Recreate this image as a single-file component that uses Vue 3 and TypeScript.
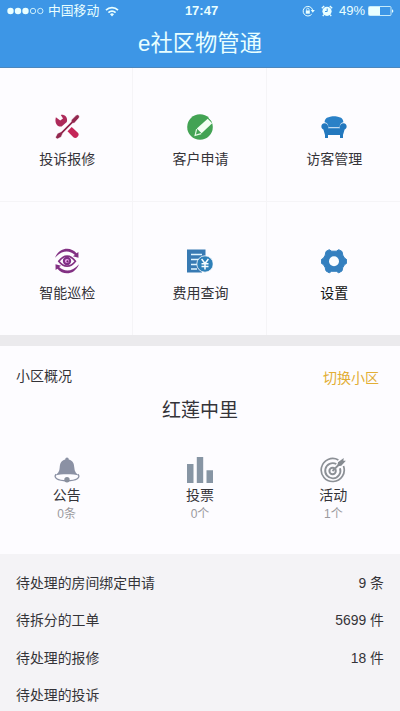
<script setup lang="ts">
interface Shortcut {
  icon: 'tools' | 'pencil' | 'sofa' | 'eye' | 'bill' | 'gear'
  label: string
}

interface Stat {
  icon: 'bell' | 'bars' | 'target'
  label: string
  count: string
}

interface Todo {
  label: string
  value?: string
}

const shortcuts: Shortcut[] = [
  { icon: 'tools', label: '投诉报修' },
  { icon: 'pencil', label: '客户申请' },
  { icon: 'sofa', label: '访客管理' },
  { icon: 'eye', label: '智能巡检' },
  { icon: 'bill', label: '费用查询' },
  { icon: 'gear', label: '设置' },
]

const stats: Stat[] = [
  { icon: 'bell', label: '公告', count: '0条' },
  { icon: 'bars', label: '投票', count: '0个' },
  { icon: 'target', label: '活动', count: '1个' },
]

const todos: Todo[] = [
  { label: '待处理的房间绑定申请', value: '9 条' },
  { label: '待拆分的工单', value: '5699 件' },
  { label: '待处理的报修', value: '18 件' },
  { label: '待处理的投诉' },
]
</script>

<template>
  <div class="screen">
    <header class="header">
      <div class="status">
        <div class="status-left">
          <svg class="signal" viewBox="0 0 37 8">
            <g fill="currentColor">
              <circle cx="3.5" cy="4" r="3.2" />
              <circle cx="11" cy="4" r="3.2" />
              <circle cx="18.5" cy="4" r="3.2" />
            </g>
            <g fill="none" stroke="currentColor" stroke-width="0.8">
              <circle cx="26" cy="4" r="2.7" />
              <circle cx="33.3" cy="4" r="2.7" />
            </g>
          </svg>
          <span class="carrier">中国移动</span>
          <svg class="wifi" viewBox="0 0 14 11">
            <g fill="none" stroke="currentColor" stroke-width="1.7">
              <path d="M1 4.2a8.5 8.5 0 0 1 12 0" />
              <path d="M3.4 6.6a5.1 5.1 0 0 1 7.2 0" />
            </g>
            <path d="M5 8.2a2.8 2.8 0 0 1 4 0l-2 2.2z" fill="currentColor" />
          </svg>
        </div>
        <span class="time">17:47</span>
        <div class="status-right">
          <svg class="lock" viewBox="0 0 13 12">
            <path d="M9.7 9.2A4.8 4.8 0 1 1 10.6 5" fill="none" stroke="currentColor" />
            <path d="M8.8 5h4l-2 2.8z" fill="currentColor" />
            <path d="M3.8 5.5h4v3.2h-4z" fill="currentColor" />
            <path d="M4.6 5.8V4.4a1.2 1.2 0 0 1 2.4 0v1.4" fill="none" stroke="currentColor" stroke-width="0.8" />
          </svg>
          <svg class="alarm" viewBox="0 0 12 12">
            <circle cx="6" cy="6.3" r="4.6" fill="currentColor" />
            <path d="M.8 3.2 3.2 1M8.8 1l2.4 2.2M2.8 9.7l-1 1.4M9.2 9.7l1 1.4" stroke="currentColor" stroke-width="1.3" />
            <path d="M6.2 3.5v3H4" fill="none" stroke="#3d96e6" />
          </svg>
          <span class="percent">49%</span>
          <svg class="battery" viewBox="0 0 26 10">
            <rect x=".5" y=".5" width="22.5" height="9" rx="1" fill="none" stroke="currentColor" stroke-width=".8" />
            <rect x="1" y="1" width="11" height="8" fill="currentColor" />
            <path d="M24 3.2c1.8.4 1.8 3.2 0 3.6z" fill="currentColor" />
          </svg>
        </div>
      </div>
      <h1 class="title">e社区物管通</h1>
    </header>

    <nav class="grid">
      <div v-for="item in shortcuts" :key="item.label" class="cell" :class="item.icon">
        <svg v-if="item.icon === 'tools'" class="icon" viewBox="0 0 26 26">
          <path d="M1.9 3.2 6.2 6.5 9 4.6 6.8.9c3.4-.6 6.4 1.6 6.3 5.3l-.3 1.8-5.2 4.5C3.9 13.4.1 9.3 1.9 3.2z" fill="#ad2a5a" />
          <path d="M13.5 17.3 17.7 13l6.2 5.8c2.4 2.5-1.7 6.9-4.5 4.5z" fill="#c52658" />
          <path d="M24.7 1.2c1 .9.8 2-.3 3.4l-4 4.5-1.7.2-9.9 10-1.7 3.8-4 2-1.6-1.8 2-3.9 3.8-1.7 9.9-9.9.2-1.8 4.4-4.4c1-1.1 2.1-1.2 2.9-.4z" fill="#93284f" stroke="#fdfcff" stroke-width=".5" />
        </svg>

        <svg v-else-if="item.icon === 'pencil'" class="icon" viewBox="0 0 26 26">
          <circle cx="13" cy="13" r="12.8" fill="#43a354" />
          <path d="m20.7 4.8 4.5 4.4-10.6 10.1-4.8-4.7z" fill="#f4fff4" />
          <path d="m9.6 15.2-1.5 6.2 6.1-1.7" fill="none" stroke="#e4f8e4" stroke-width="1.2" />
          <path d="m22.3 3.2 3 3" stroke="#fdfcff" stroke-width="2" />
        </svg>

        <svg v-else-if="item.icon === 'sofa'" class="icon" viewBox="0 0 26 26">
          <path d="M3.6 8.2C4 4.3 6.1 3.5 8.4 3.1 10 1.9 16 1.9 17.6 3.1c2.3.4 4.400 1.200 4.800 5.100-2.400.2-3.600 2-3.800 5H7.400c-.2-3-1.400-4.800-3.800-5z" fill="#2a81c7" />
          <path d="M7.5 14h11c.2-3.300 1.700-4.900 4-4.800 3.700.3 4.200 4.900 1.100 6.300L22 21H4l-1.600-5.500C-.7 14.100-.2 9.500 3.500 9.200c2.300-.1 3.800 1.500 4 4.800z" fill="#2378be" />
          <path d="M5.500 20.500v3.500M20.500 20.500v3.500" stroke="#2378be" stroke-width="3" />
          <path d="M7 14.200h12" stroke="#8fc3e8" stroke-width=".5" />
        </svg>

        <svg v-else-if="item.icon === 'eye'" class="icon" viewBox="0 0 26 26">
          <path d="M1 9.800C5.200-.8 16.500-2 22.600 5.200l1.800-1.100.1 5.700-5.600-1.500 2-1.400C15.500 1.800 7.600 2.100 1 9.800z" fill="#823083" />
          <path d="M25 16.200c-4.200 10.600-15.500 11.800-21.600 4.600l-1.800 1.100-.1-5.700 5.600 1.500-2 1.400c5.400 5.100 13.300 4.800 19.900-2.900z" fill="#823083" />
          <path d="M4.800 13.300c5-7 11.600-7 16.600 0-5 6.500-11.600 6.500-16.600 0z" fill="none" stroke="#823083" stroke-width="1.7" />
          <circle cx="13" cy="13" r="4.200" fill="#803087" />
          <circle cx="13" cy="13" r="2.100" fill="#f0aaf0" />
          <circle cx="13.500" cy="13.400" r="1.100" fill="#6a276f" />
        </svg>

        <svg v-else-if="item.icon === 'bill'" class="icon" viewBox="0 0 26 26">
          <path d="M0 1.500h18.500v21H15v2H0z" fill="#387ab3" />
          <path d="M4 6.500h11M4 11.500h9M4 16.500h6M4 21h6" stroke="#e0f5ff" stroke-width="1.600" />
          <circle cx="18" cy="16" r="8.200" fill="#2f80b8" stroke="#fdfcff" stroke-width=".8" />
          <path d="m14.600 11 3.400 4.500 3.400-4.500M18 15.500v6M14.500 15.700h7M14.500 18.500h7" fill="none" stroke="#f7fdff" stroke-width="1.500" />
        </svg>

        <svg v-else class="icon" viewBox="0 0 26 26">
          <path d="m8.200 1.700 2.500 1.500h4.600l2.500-1.500L21 3.500l.8 3.700 1.600 2.800 2.300 1.600v3.600l-2.300 1.600-1.600 2.800-.8 3.300-3.200 1.900-2.500-1.500h-4.600l-2.500 1.500L5 22.900l-.8-3.300-1.600-2.800-2.300-1.600v-3.600L2.600 10l1.600-2.800L5 3.500z" fill="#3580bf" stroke="#3580bf" stroke-linejoin="round" />
          <circle cx="13" cy="13.300" r="5" fill="#fbfdff" />
        </svg>
        <span class="cell-label">{{ item.label }}</span>
      </div>
    </nav>

    <section class="overview">
      <div class="overview-head">
        <span class="overview-title">小区概况</span>
        <span class="switch">切换小区</span>
      </div>
      <h2 class="community">红莲中里</h2>
      <div class="stats">
        <div v-for="stat in stats" :key="stat.label" class="stat">
          <svg v-if="stat.icon === 'bell'" class="icon" viewBox="0 0 26 26">
            <path d="M11.200 2.400a1.800 1.800 0 0 1 3.600 0c4.200 1 5.300 4.300 5.500 8 .2 4.100 1.700 6 4.700 8-5.400-1.500-18.600-1.500-24 0 3-2 4.500-3.900 4.700-8 .2-3.700 1.300-7 5.500-8z" fill="#8b91a4" />
            <path d="M2 17.300C-.8 20.500 3 23.800 13 23.800s13.800-3.300 11-6.500" fill="none" stroke="#8b91a4" stroke-width="1.300" />
            <circle cx="13" cy="22.700" r="2.700" fill="#898f9c" />
          </svg>
          <svg v-else-if="stat.icon === 'bars'" class="icon" viewBox="0 0 26 26">
            <path d="M0 7h6.500v19H0zM9.800 0h6.400v26H9.800zM19.500 13.200H26V26h-6.500z" fill="#8795a4" />
          </svg>
          <svg v-else class="icon" viewBox="0 0 26 26">
            <g fill="none" stroke="#8c9096">
              <path d="M18.400 3A11.500 11.500 0 1 0 23.500 9" stroke-width="1.700" />
              <path d="M16.300 7A7.600 7.600 0 1 0 20 11.300" stroke-width="1.900" />
              <circle cx="12.600" cy="14" r="3.200" stroke-width="2" />
              <path d="m12.500 14 7.500-7.500" stroke-width="1.800" />
            </g>
            <path d="m18 5.300 5.700-4.300-.3 2.700 2.500.1-4.600 5-3.900.4z" fill="#858a90" />
          </svg>
          <span class="stat-label">{{ stat.label }}</span>
          <span class="stat-count">{{ stat.count }}</span>
        </div>
      </div>
    </section>

    <ul class="todos">
      <li v-for="todo in todos" :key="todo.label" class="todo">
        <span>{{ todo.label }}</span>
        <span v-if="todo.value">{{ todo.value }}</span>
      </li>
    </ul>
  </div>
</template>

<style>
body {
  margin: 0;
  overflow: hidden;
}
</style>

<style scoped>
.screen {
  display: flex;
  flex-direction: column;
  width: 400px;
  height: 711px;
  overflow: hidden;
  background: #fdfcff;
  color: #343338;
  font-family: "Liberation Sans", "Noto Sans CJK SC", sans-serif;
  font-size: 14px;
}

.header {
  flex: none;
  box-sizing: border-box;
  height: 68px;
  border-bottom: 1px solid #4c87bd;
  background: #3d96e6;
  color: #e9ffff;
}

.status {
  display: grid;
  grid-template-columns: 1fr auto 1fr;
  align-items: center;
  height: 22px;
  padding: 0 6px 0 7px;
  line-height: 22px;
}

.status-left,
.status-right {
  display: flex;
  align-items: center;
}

.status-right {
  justify-content: flex-end;
}

.signal {
  width: 37px;
  height: 8px;
}

.carrier {
  margin-left: 4px;
  font-size: 12.8px;
}

.wifi {
  width: 14px;
  height: 11px;
  margin-left: 6px;
}

.time {
  padding-left: 2px;
  font-size: 13px;
  font-weight: 700;
}

.lock {
  width: 13px;
  height: 12px;
}

.alarm {
  width: 12px;
  height: 12px;
  margin-left: 6px;
}

.percent {
  margin-left: 6px;
  font-size: 13px;
}

.battery {
  width: 26px;
  height: 10px;
  margin-left: 3px;
}

.title {
  margin: 0;
  font-size: 22.3px;
  font-weight: 400;
  line-height: 44px;
  text-align: center;
}

.grid {
  flex: none;
  display: grid;
  grid-template-columns: repeat(3, 1fr);
  grid-template-rows: 134px 133px;
  height: 267px;
}

.cell {
  display: flex;
  flex-direction: column;
  align-items: center;
  box-sizing: border-box;
  padding: 46px 0 0 2px;
  border-right: 1px solid #f5f4f7;
  border-bottom: 1px solid #f5f4f7;
}

.cell:nth-child(3n) {
  border-right: 0;
}

.cell:nth-child(n + 4) {
  border-bottom: 0;
}

.icon {
  display: block;
  flex: none;
  width: 26px;
  height: 26px;
}

.cell-label {
  margin-top: 9px;
  line-height: 20px;
}

.gear .cell-label {
  color: #111;
}

.overview {
  flex: none;
  box-sizing: border-box;
  height: 219px;
  border-top: 11px solid #ebeaed;
}

.overview-head {
  display: flex;
  justify-content: space-between;
  padding: 20px 21px 0 16px;
  line-height: 20px;
}

.switch {
  margin-top: 2px;
  color: #e2ae35;
}

.community {
  margin: 9px 0 0;
  font-size: 19px;
  font-weight: 400;
  line-height: 28px;
  text-align: center;
}

.stats {
  display: grid;
  grid-template-columns: repeat(3, 1fr);
  margin-top: 32px;
}

.stat {
  display: flex;
  flex-direction: column;
  align-items: center;
}

.stat-label {
  margin-top: 2px;
  line-height: 20px;
}

.stat-count {
  margin-top: 1px;
  color: #9a999d;
  font-size: 12px;
  line-height: 17px;
}

.todos {
  flex: 1;
  margin: 0;
  padding: 11px 16px 0;
  background: #f4f3f6;
  font-size: 13.9px;
  list-style: none;
}

.todo {
  display: flex;
  justify-content: space-between;
  height: 37.4px;
  line-height: 37.4px;
}
</style>
